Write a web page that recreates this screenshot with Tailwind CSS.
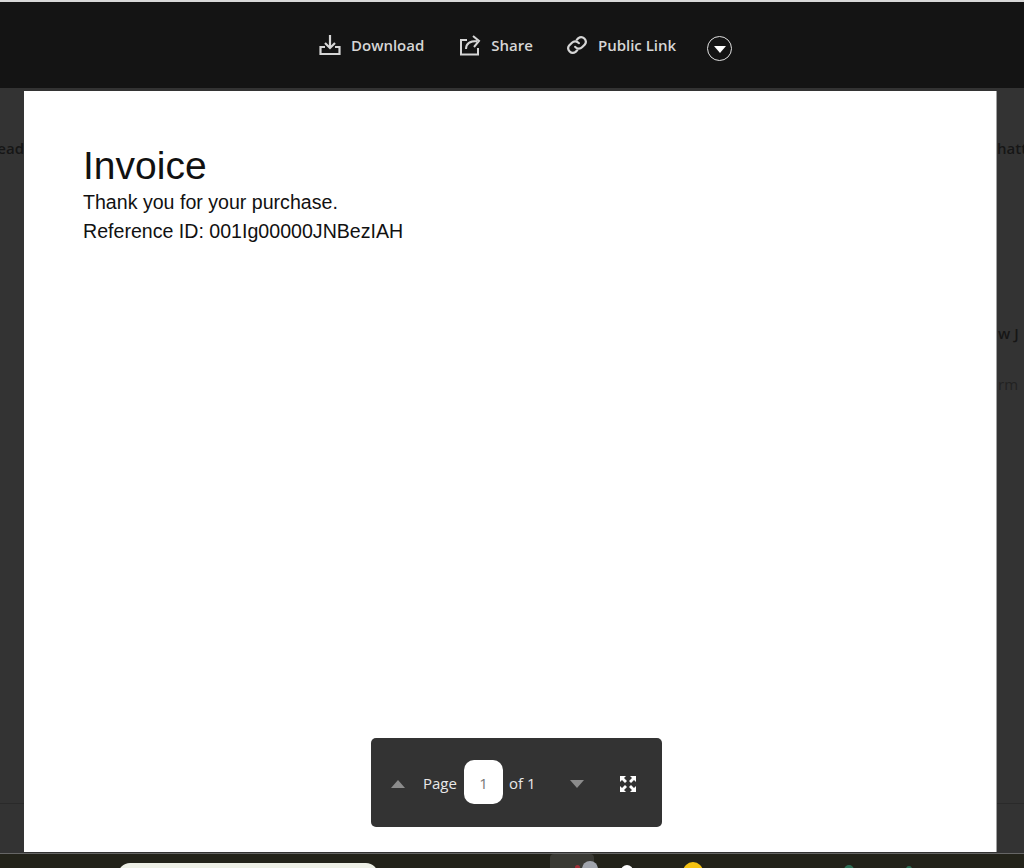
<!DOCTYPE html>
<html lang="en">

<head>
    <meta charset="UTF-8">
    <meta name="viewport" content="width=device-width, initial-scale=1.0">
    <title>Invoice</title>
    <script src="https://cdn.jsdelivr.net/npm/@tailwindcss/browser@4"></script>
</head>

<body class="w-[1024px] h-[868px] overflow-hidden flex flex-col bg-[#333333] font-['Open_Sans',sans-serif]">
    <!-- Top action bar -->
    <div class="h-[2px] bg-[#d8d8d8]"></div>
    <header class="h-[86px] bg-[#141414] flex items-center pl-[319px] text-[#d6d6d6] text-[15px] font-semibold">
        <a class="flex items-center gap-[10px] mr-[35px]">
            <svg class="w-[22px] h-[22px]" viewBox="0 0 22 22" fill="none" stroke="currentColor" stroke-width="2.200">
                <path d="M11 1v13M6 9l5 5 5-5M6 13H1.500v7h19v-7H16" />
            </svg>
            Download
        </a>
        <a class="flex items-center gap-[10px] mr-[33px]">
            <svg class="w-[22px] h-[22px]" viewBox="0 0 22 22" fill="none" stroke="currentColor" stroke-width="2">
                <path d="M8 6H2v14.500h17V14M7 15c0-5 4-8 11-8M14 2l6 5-5 6" />
            </svg>
            Share
        </a>
        <a class="flex items-center gap-[10px] mr-[31px]">
            <svg class="w-[22px] h-[22px]" viewBox="0 0 24 24" fill="none" stroke="currentColor" stroke-width="2.400" stroke-linecap="round">
                <path d="M10 14a5 5 0 0 0 7.500.5l3-3a5 5 0 0 0-7-7l-1.700 1.700" />
                <path d="M14 10a5 5 0 0 0-7.500-.5l-3 3a5 5 0 0 0 7 7l1.700-1.700" />
            </svg>
            Public Link
        </a>
        <button class="w-[25px] h-[25px] rounded-full border border-[#e0e0e0] flex items-center justify-center mt-[6px]">
            <span class="w-0 h-0 mt-[3px] border-x-[6px] border-x-transparent border-t-[7px] border-t-white"></span>
        </button>
    </header>

    <!-- Viewer -->
    <main class="relative flex-1 min-h-0 flex">
        <div class="absolute left-0 top-[715px] w-full h-[1px] bg-[#2a2a2a]"></div>
        <div class="w-[24px] pt-[52px] overflow-hidden flex justify-end">
            <span class="text-[15px] text-[#161616] leading-4 font-semibold">ead</span>
        </div>
        <div class="relative w-[973px] mt-[3px] mb-[1px] bg-white border-r border-r-[#a0a0a0] pl-[59px] pt-[53px] text-[#111111] font-['Liberation_Sans',sans-serif]">
            <h1 class="text-[39px] leading-[44px]">Invoice</h1>
            <p class="text-[19.600px] leading-[29px]">Thank you for your purchase.</p>
            <p class="text-[19.600px] leading-[29px]">Reference ID: 001Ig00000JNBezIAH</p>
        </div>
        <div class="w-[27px] overflow-hidden pt-[52px] flex flex-col text-[15px] leading-4 text-[#161616] font-semibold whitespace-nowrap">
            <span>hatter</span>
            <span class="mt-[169px] ml-[1px]">w J</span>
            <span class="mt-[35px] ml-[1px] text-[#222222] font-normal">rm</span>
        </div>

        <!-- Page controls -->
        <div class="absolute left-[371px] top-[650px] w-[291px] h-[89px] rounded-[5px] bg-[#333333] flex items-center pl-[20px] text-[15px] text-[#e8e8e8]">
            <span class="w-0 h-0 mt-[3px] border-x-[7px] border-x-transparent border-b-[8px] border-b-[#8c8c8c]"></span>
            <span class="ml-[18px] mt-[2px]">Page</span>
            <span class="w-[39px] h-[44px] pt-[3px] ml-[7px] mb-[2px] rounded-[10px] bg-white text-[#777777] flex items-center justify-center">1</span>
            <span class="ml-[6px] mt-[2px]">of 1</span>
            <span class="ml-[35px] mt-[3px] w-0 h-0 border-x-[7px] border-x-transparent border-t-[8px] border-t-[#8c8c8c]"></span>
            <svg class="ml-[35px] mt-[3px] w-[18px] h-[18px]" viewBox="0 0 18 18" fill="white">
                <path d="M1 1h6L5 3l3 3-2 2-3-3-2 2zM17 1v6l-2-2-3 3-2-2 3-3-2-2zM1 17v-6l2 2 3-3 2 2-3 3 2 2zM17 17h-6l2-2-3-3 2-2 3 3 2-2z" />
            </svg>
        </div>
    </main>

    <!-- Taskbar, cut off by the window edge -->
    <footer class="h-[15px] bg-[#23231a] border-t border-t-[#666666] overflow-hidden flex items-start pl-[118px]">
        <div class="w-[260px] h-[20px] mt-[9px] rounded-t-[12px] bg-[#eef0e6]"></div>
        <div class="w-[44px] h-[14px] ml-[172px] rounded-t-[4px] bg-[#3a3a34] flex justify-end">
            <span class="w-[5px] h-[5px] mt-[11px] mr-[2px] rounded-full bg-[#a03038]"></span>
            <span class="w-[16px] h-[16px] mt-[7px] mr-[-4px] rounded-full bg-[#a0a4ac]"></span>
        </div>
        <span class="w-[12px] h-[12px] ml-[27px] mt-[11px] rounded-full bg-white"></span>
        <span class="w-[20px] h-[20px] ml-[50px] mt-[8px] rounded-full bg-[#f5c211]"></span>
        <span class="w-[10px] h-[10px] ml-[141px] mt-[11px] rounded-full bg-[#2f6f56]"></span>
        <span class="w-[6px] h-[6px] ml-[52px] mt-[12px] rounded-full bg-[#2f6f56]"></span>
    </footer>
</body>

</html>
